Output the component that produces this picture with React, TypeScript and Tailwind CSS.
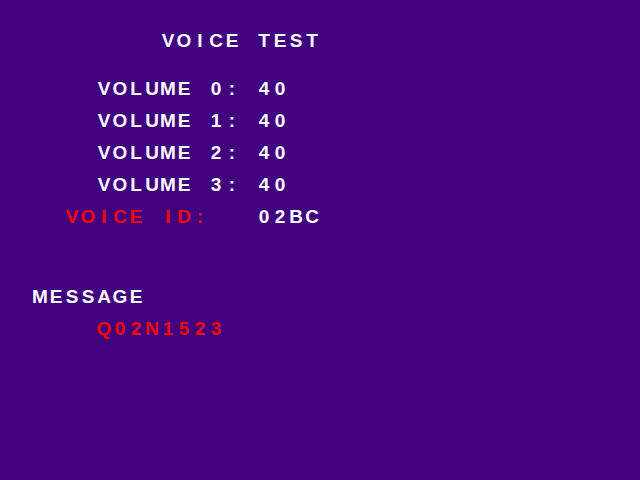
type Seg = { col: number; text: string; color?: 'white' | 'red' };

// screen is a 40x30 grid of 16px character cells
const ROWS: Record<number, Seg[]> = {
  2: [{ col: 10, text: 'VOICE TEST' }],
  5: [{ col: 6, text: 'VOLUME 0: 40' }],
  7: [{ col: 6, text: 'VOLUME 1: 40' }],
  9: [{ col: 6, text: 'VOLUME 2: 40' }],
  11: [{ col: 6, text: 'VOLUME 3: 40' }],
  13: [
    { col: 4, text: 'VOICE ID:', color: 'red' },
    { col: 16, text: '02BC' },
  ],
  18: [{ col: 2, text: 'MESSAGE' }],
  20: [{ col: 6, text: 'Q02N1523', color: 'red' }],
};

const buildLine = (segs: Seg[]) => {
  const cells: { ch: string; color: string }[] = [];
  segs.forEach((s) => {
    while (cells.length < s.col) cells.push({ ch: ' ', color: 'white' });
    s.text.split('').forEach((ch) => cells.push({ ch, color: s.color ?? 'white' }));
  });
  return cells;
};

export default function App() {
  return (
    <div className="w-[640px] h-[480px] bg-[#40007f] flex flex-col overflow-hidden font-['Liberation_Sans',Arial,sans-serif] font-bold text-[19px] leading-none">
      {Array.from({ length: 30 }, (_, r) => (
        <div key={r} className="h-4 flex">
          {ROWS[r] &&
            buildLine(ROWS[r]).map((c, i) => (
              <span
                key={i}
                className={
                  'w-4 h-4 flex items-center justify-center ' +
                  (c.color === 'red' ? 'text-[#ff0000]' : 'text-white')
                }
              >
                {c.ch === ' ' ? '\u00a0' : c.ch}
              </span>
            ))}
        </div>
      ))}
    </div>
  );
}
